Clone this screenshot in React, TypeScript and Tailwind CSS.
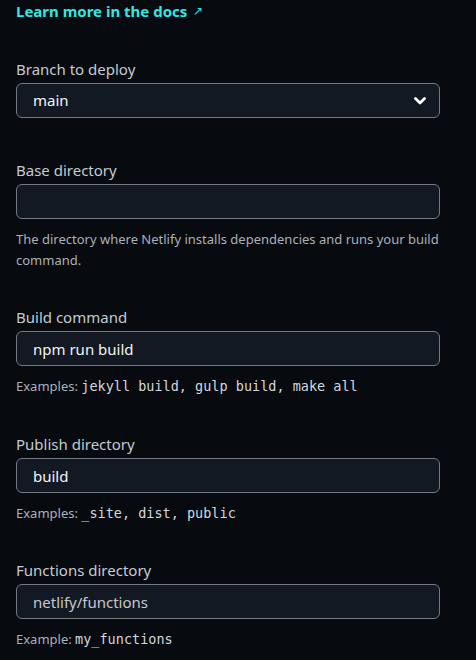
import React from 'react';

interface FieldProps {
  label: string;
  value?: string;
  placeholder?: string;
  help?: React.ReactNode;
  className?: string;
}

const sans = { fontFamily: '"Noto Sans", "Open Sans", sans-serif' };

// Plain text field in the build settings form
const Field: React.FC<FieldProps> = ({ label, value, placeholder, help, className }) => (
  <div className={className}>
    <label className="block text-[15px] leading-[20px] text-[#c5cad2]">{label}</label>
    <input
      readOnly
      value={value ?? ''}
      placeholder={placeholder}
      className="mt-[4px] block w-full h-[35px] rounded-[6px] border border-[#737a85] bg-[#131922] px-4 text-[15px] text-[#f4f5f7] placeholder:text-[#c4c8cf] outline-none"
      style={sans}
    />
    {help && <p className="mt-[10px] text-[13px] leading-[21px] text-[#aab1bb]">{help}</p>}
  </div>
);

const Code: React.FC<{ children: React.ReactNode }> = ({ children }) => (
  <code
    className="text-[13.5px] font-normal text-[#d2d7de]"
    style={{ fontFamily: '"DejaVu Sans Mono", "Liberation Mono", monospace' }}
  >
    {children}
  </code>
);

export default function App() {
  return (
    <div className="min-h-[660px] w-[476px] bg-[#070a0e] px-4" style={sans}>
      <div className="w-[424px] flex flex-col">
        {/* Docs link */}
        <a className="flex items-center gap-[6px] text-[15px] leading-[22px] font-bold text-[#32e6e2]">
          Learn more in the docs
          <span className="text-[12px] font-normal">↗</span>
        </a>

        {/* Branch select */}
        <div className="mt-[37px]">
          <label className="block text-[15px] leading-[20px] text-[#c5cad2]">Branch to deploy</label>
          <div className="mt-[4px] flex items-center justify-between h-[35px] rounded-[6px] border border-[#737a85] bg-[#131922] pl-4 pr-[13px]">
            <span className="text-[15px] text-[#f4f5f7]">main</span>
            <svg width="12" height="8" viewBox="0 0 12 8" fill="none">
              <path d="M1.5 1.5 L6 6 L10.5 1.5" stroke="#ffffff" strokeWidth="2.8" strokeLinecap="round" strokeLinejoin="round" />
            </svg>
          </div>
        </div>

        <Field
          className="mt-[42px]"
          label="Base directory"
          help="The directory where Netlify installs dependencies and runs your build command."
        />

        <Field
          className="mt-[36px]"
          label="Build command"
          value="npm run build"
          help={
            <>
              Examples: <Code>jekyll build, gulp build, make all</Code>
            </>
          }
        />

        <Field
          className="mt-[37px]"
          label="Publish directory"
          value="build"
          help={
            <>
              Examples: <Code>_site, dist, public</Code>
            </>
          }
        />

        <Field
          className="mt-[36px]"
          label="Functions directory"
          placeholder="netlify/functions"
          help={
            <>
              Example: <Code>my_functions</Code>
            </>
          }
        />
      </div>
    </div>
  );
}
